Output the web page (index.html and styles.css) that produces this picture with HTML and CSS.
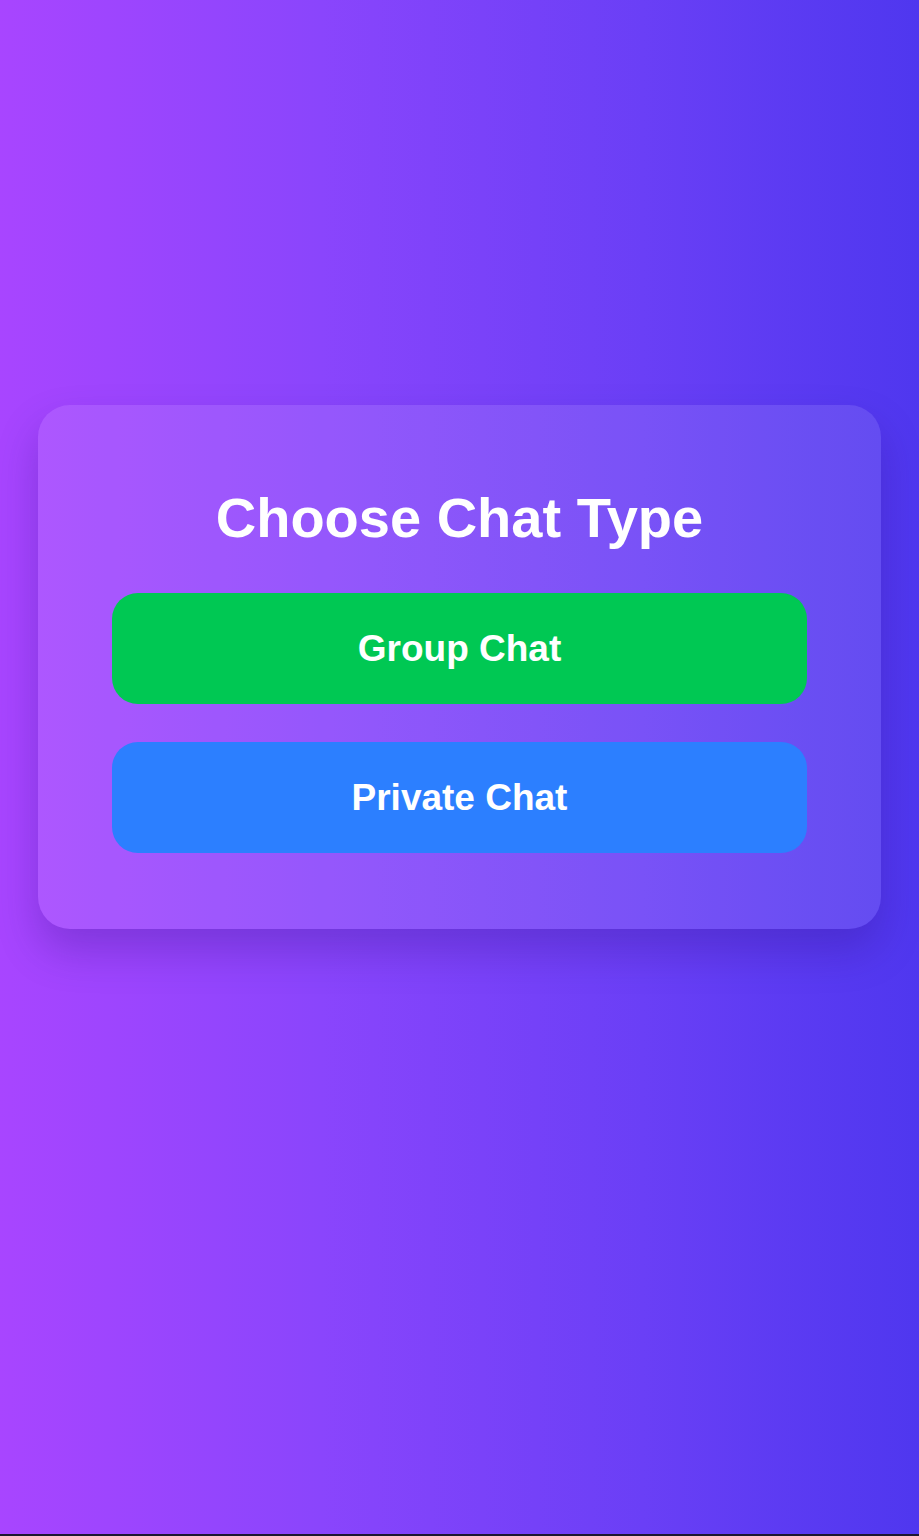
FILE: index.html
```html
<!DOCTYPE html>
<html lang="en">
<head>
<meta charset="utf-8">
<title>Choose Chat Type</title>
<link rel="stylesheet" href="styles.css">
</head>
<body>
<main class="page">
  <section class="card">
    <h1 class="title">Choose Chat Type</h1>
    <div class="actions">
      <button class="btn btn-group">Group Chat</button>
      <button class="btn btn-private">Private Chat</button>
    </div>
  </section>
</main>
</body>
</html>
```
FILE: styles.css
```css
html {
  background: #1d1730;
}
body {
  margin: 0;
  font-family: "Liberation Sans", Arial, sans-serif;
}
.page {
  height: 1534px;
  box-sizing: border-box;
  padding: 405px 38px 0;
  background: linear-gradient(to right, #a845ff 0%, #8a45fc 35%, #6a3ff6 70%, #4f37ef 100%);
}
.card {
  box-sizing: border-box;
  height: 524px;
  padding: 81px 74px 0;
  border-radius: 32px;
  background: rgba(255, 255, 255, 0.1);
  box-shadow: 0 22px 40px rgba(40, 10, 120, 0.25);
}
.title {
  margin: 0 0 44px;
  font-size: 56px;
  line-height: 63px;
  font-weight: 700;
  color: #ffffff;
  text-align: center;
}
.actions {
  display: flex;
  flex-direction: column;
  gap: 38px;
}
.btn {
  height: 111px;
  border: none;
  border-radius: 26px;
  font-family: "Liberation Sans", Arial, sans-serif;
  font-size: 37px;
  font-weight: 700;
  color: #ffffff;
  cursor: pointer;
}
.btn-group {
  background: #00c853;
}
.btn-private {
  background: #2c7fff;
}
```
